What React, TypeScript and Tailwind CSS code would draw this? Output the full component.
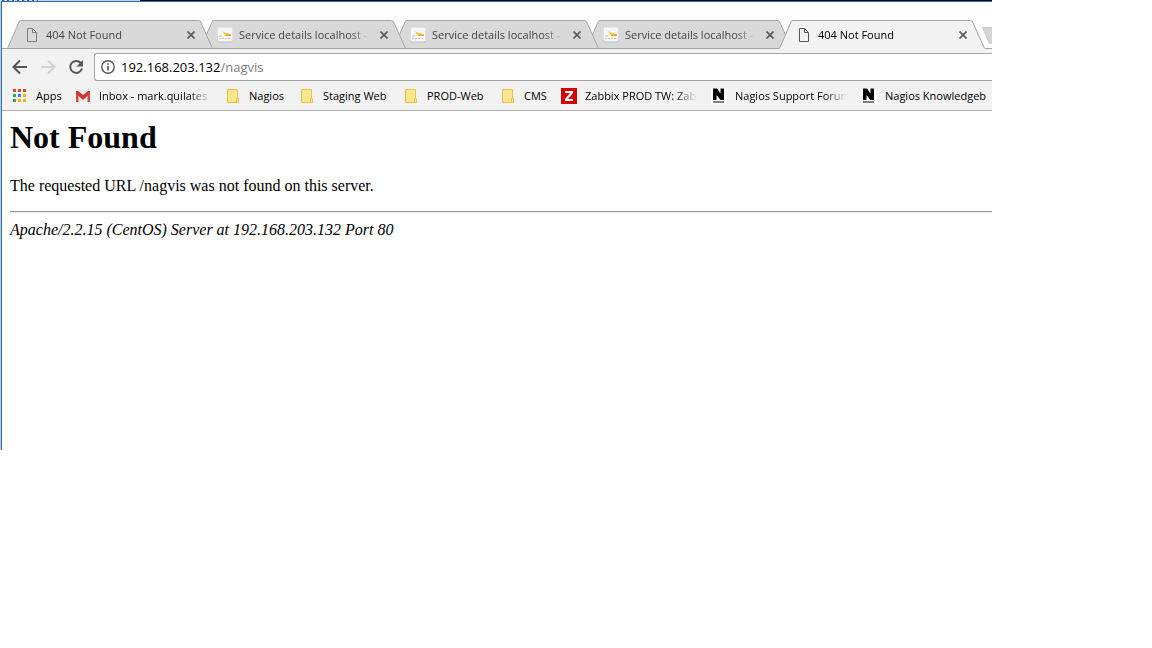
import type { ReactNode } from 'react';

type TabProps = { title: string; icon: ReactNode; active?: boolean; layer: string };

const PageIcon = ({ color }: { color: string }) => (
  <svg width="16" height="16" viewBox="0 0 16 16" fill="none" stroke={color}>
    <path d="M3.5 1.5h5l4 4v9h-9z M8.5 1.5v4h4" />
  </svg>
);

const GraphIcon = () => (
  <svg width="16" height="16" viewBox="0 0 16 16">
    <rect x="0.5" y="1" width="15" height="14.5" rx="2" fill="#bdbdbd" />
    <rect x="0.5" y="0.5" width="15" height="14" rx="2" fill="#f6f6f6" />
    <path d="M5 4l3 1.500 6 2v1.500H8z" fill="#f7cf3a" />
    <path d="M9 7.500l5 0v1.500H8z" fill="#f0a030" />
    <path d="M2 9h3" stroke="#e9b3a6" />
    <path d="M2 11.500h12" stroke="#c8c8c8" strokeDasharray="2 1" />
  </svg>
);

const FolderIcon = () => (
  <svg width="16" height="16" viewBox="0 0 16 16" fill="#ffe58f" stroke="#e8c34a">
    <path d="M2.500 1.500h10v13h-10z" />
    <path d="M11.500 14.500v-4h2v4z" />
  </svg>
);

const AppsIcon = () => (
  <svg width="16" height="16" viewBox="0 0 16 16">
    <path d="M1 1h3v3h-3zM6 1h3v3h-3zM11 1h3v3h-3z" fill="#ea4335" />
    <path d="M1 6h3v3h-3zM1 11h3v3h-3z" fill="#34a853" />
    <path d="M6 6h3v3h-3z" fill="#1e88f5" />
    <path d="M11 6h3v3h-3zM6 11h3v3h-3zM11 11h3v3h-3z" fill="#fbb10c" />
  </svg>
);

const MailIcon = () => (
  <svg width="16" height="16" viewBox="0 0 16 16">
    <path d="M1 3h14v11H1z" fill="#ececec" />
    <path d="M1 14V3.500l7 6 7-6V14h-2.500V8L8 12 3.500 8v6z" fill="#d54b3d" />
    <path d="M1 3h2l5 4 5-4h2v2l-7 6-7-6z" fill="#c83a2e" />
  </svg>
);

const ZabbixIcon = () => (
  <svg width="16" height="16" viewBox="0 0 16 16">
    <path d="M0 0h16v16H0z" fill="#d40000" />
    <path d="M4 3h8v2L7 11h5v2H4v-2L9 5H4z" fill="#fff" />
  </svg>
);

const NagiosIcon = () => (
  <svg width="16" height="16" viewBox="0 0 16 16">
    <path d="M0 0h16v16H0z" fill="#fff" />
    <path d="M2 0.500h4l3.500 5V0.500H13V12H9.500L5.500 7v5H2z" fill="#000" />
    <path d="M2 14h11" stroke="#000" />
  </svg>
);

const tabs: TabProps[] = [
  { title: '404 Not Found', icon: <PageIcon color="#7d7d7d" />, layer: 'z-40' },
  { title: 'Service details localhost -', icon: <GraphIcon />, layer: 'z-30' },
  { title: 'Service details localhost -', icon: <GraphIcon />, layer: 'z-20' },
  { title: 'Service details localhost -', icon: <GraphIcon />, layer: 'z-10' },
  { title: '404 Not Found', icon: <PageIcon color="#555555" />, active: true, layer: 'z-50' },
];

const bookmarks = [
  { label: 'Apps', icon: <AppsIcon />, width: 'w-[63px]' },
  { label: 'Inbox - mark.quilates', icon: <MailIcon />, width: 'w-[150px]', fade: true },
  { label: 'Nagios', icon: <FolderIcon />, width: 'w-[74px]' },
  { label: 'Staging Web', icon: <FolderIcon />, width: 'w-[104px]' },
  { label: 'PROD-Web', icon: <FolderIcon />, width: 'w-[97px]' },
  { label: 'CMS', icon: <FolderIcon />, width: 'w-[61px]' },
  { label: 'Zabbix PROD TW: Zab', icon: <ZabbixIcon />, width: 'w-[150px]', fade: true },
  { label: 'Nagios Support Forum', icon: <NagiosIcon />, width: 'w-[150px]', fade: true },
  { label: 'Nagios Knowledgeb', icon: <NagiosIcon />, width: 'w-[150px]' },
];

const Tab = ({ title, icon, active, layer }: TabProps) => (
  <div className={`relative -mr-[13px] flex h-[29px] w-[206px] shrink-0 items-center pl-[17px] pr-[14px] ${layer}`}>
    <svg className="absolute inset-0 -z-10" width="206" height="29" viewBox="0 0 206 29">
      {active && <path d="M0 29L1 27H205L206 29z" fill="#f2f2f2" />}
      <path
        d="M0.500 28.500L12 2Q12.700 0.500 14 0.500H191.500Q193 0.500 193.700 2L205.500 28.500"
        fill={active ? '#f2f2f2' : '#d9d9d9'}
        stroke="#a5a5a5"
      />
      {!active && <path d="M0 28.500H206" stroke="#a5a5a5" />}
    </svg>
    {icon}
    <span
      className={`ml-[6px] flex-1 overflow-hidden whitespace-nowrap pt-px [mask-image:linear-gradient(to_right,black_85%,transparent)] ${active ? 'text-black' : 'text-[#444444]'}`}
    >
      {title}
    </span>
    <button aria-label="Close tab" className="ml-[6px] flex size-4 items-center justify-center pt-px">
      <svg width="8" height="8" viewBox="0 0 8 8" stroke="#5a5a5a" strokeWidth="1.700">
        <path d="M0.500 0.500l7 7M7.500 0.500l-7 7" />
      </svg>
    </button>
  </div>
);

const Toolbar = () => (
  <div className="flex h-8 items-end bg-[#f2f2f2] pl-2">
    <div className="flex h-7 items-center gap-3">
      <button aria-label="Back" className="size-4">
        <svg className="ml-0.5" width="16" height="16" viewBox="0 0 16 16" fill="none" stroke="#555555" strokeWidth="2">
          <path d="M15 8H2M8 1.500L1.500 8 8 14.500" />
        </svg>
      </button>
      <button aria-label="Forward" className="size-4">
        <svg className="ml-0.5" width="16" height="16" viewBox="0 0 16 16" fill="none" stroke="#d2d2d2" strokeWidth="2">
          <path d="M1 8h13M8 1.500L14.500 8 8 14.500" />
        </svg>
      </button>
      <button aria-label="Reload" className="size-4">
        <svg className="ml-0.5" width="16" height="16" viewBox="0 0 16 16">
          <path d="M12.800 4A6 6 0 1 0 14 9.500" fill="none" stroke="#555555" strokeWidth="2" />
          <path d="M15 1v6.500H8.500z" fill="#555555" />
        </svg>
      </button>
    </div>
    <label className="ml-3 flex h-7 flex-1 items-center rounded-l-[3px] border border-r-0 border-[#a5a5a5] bg-white pl-[6px] text-[13px]">
      <svg width="14" height="14" viewBox="0 0 14 14" fill="none" stroke="#555555">
        <circle cx="7" cy="7" r="6.200" strokeWidth="1.400" />
        <path d="M7 6v4.500M7 3.300v1.500" strokeWidth="1.600" />
      </svg>
      <span className="ml-[6px] pt-px">192.168.203.132</span>
      <input aria-label="Address" defaultValue="/nagvis" className="flex-1 pt-px text-[#808080] outline-none" />
    </label>
  </div>
);

const App = () => {
  return (
    <div className="mr-40 overflow-hidden bg-white font-['Open_Sans',sans-serif] text-[11px] text-black">
      {/* edge of the window behind */}
      <div className="flex h-px bg-black">
        <div className="w-[38px] bg-[repeating-linear-gradient(to_right,#dcdcdc_0px_2px,#3c5a96_2px_4px,#e8c8a0_4px_5px)]" />
        <div className="w-[102px] bg-[#cfcfcf]" />
      </div>
      <div className="border-l border-[#c8c8c8]">
        <div className="border-l border-t border-[#1f74c4]">
          {/* TABS */}
          <div className="relative isolate flex pl-[5px] pt-[18px]">
            <div className="absolute inset-x-0 bottom-0 h-px bg-[#a5a5a5]" />
            {tabs.map((tab, i) => (
              <Tab key={i} {...tab} />
            ))}
            <button aria-label="New tab" className="ml-[10px] mt-[7px] h-[17px] w-7 shrink-0">
              <svg width="28" height="17" viewBox="0 0 28 17">
                <path d="M0.500 0.500H22l6 16H9Q7.500 16.500 7 15.500z" fill="#d4d4d4" stroke="#c8c8c8" />
              </svg>
            </button>
          </div>

          <Toolbar />

          {/* BOOKMARKS */}
          <div className="flex h-[30px] items-center overflow-hidden border-b border-[#b0b0b0] bg-[#f2f2f2] pl-[10px] pt-px">
            {bookmarks.map(({ label, icon, width, fade }) => (
              <a key={label} href="#" className={`flex shrink-0 items-center gap-2 pr-[14px] ${width}`}>
                <span className="shrink-0">{icon}</span>
                <span
                  className={`whitespace-nowrap ${fade ? 'flex-1 overflow-hidden [mask-image:linear-gradient(to_right,black_80%,transparent)]' : ''}`}
                >
                  {label}
                </span>
              </a>
            ))}
          </div>

          {/* PAGE */}
          <main className="min-h-[339px] pl-2 pt-2 font-['Liberation_Serif',serif] text-base leading-[18px]">
            <h1 className="mb-[21px] text-[32px] font-bold leading-[37px]">Not Found</h1>
            <p className="mb-4">The requested URL /nagvis was not found on this server.</p>
            <hr className="mb-2 border-b border-t border-b-[#eeeeee] border-t-[#9a9a9a]" />
            <address>Apache/2.2.15 (CentOS) Server at 192.168.203.132 Port 80</address>
          </main>
        </div>
      </div>
    </div>
  );
};

export default App;
